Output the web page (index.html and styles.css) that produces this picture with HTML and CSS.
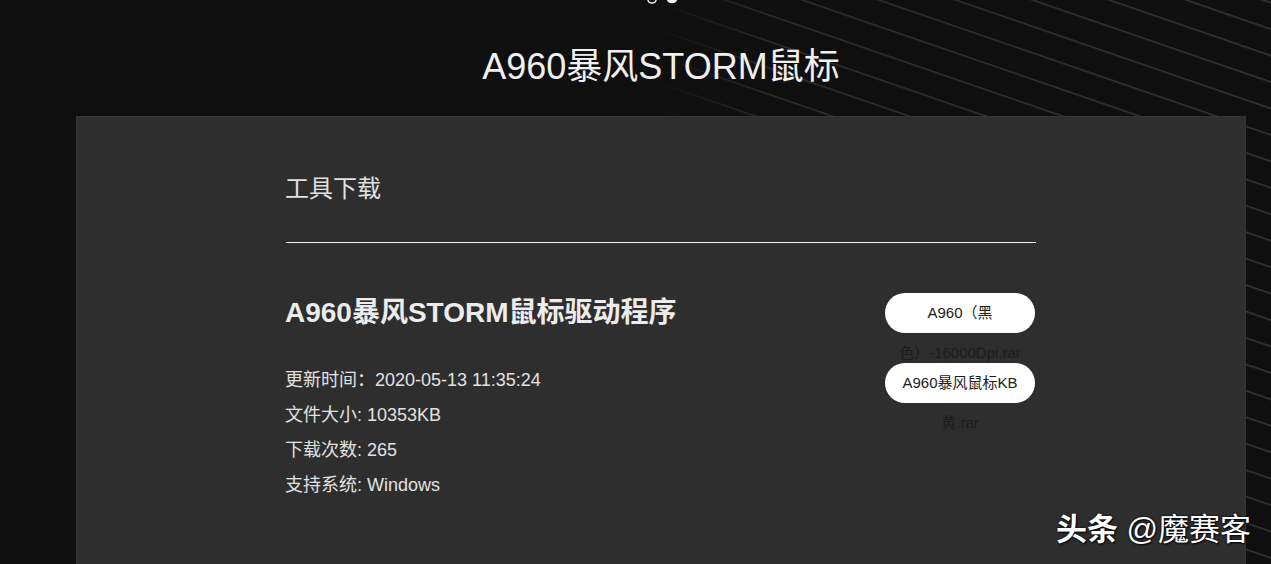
FILE: index.html
```html
<!DOCTYPE html>
<html lang="zh-CN">
<head>
  <meta charset="UTF-8">
  <meta name="viewport" content="width=device-width, initial-scale=1.0">
  <title>A960暴风STORM鼠标</title>
  <link rel="stylesheet" href="styles.css">
</head>
<body>
  <svg class="bg-lines" width="620" height="564" viewBox="0 0 620 564" aria-hidden="true">
    <defs>
      <pattern id="stripes" width="40" height="25" patternUnits="userSpaceOnUse" patternTransform="rotate(19)">
        <rect x="0" y="0" width="40" height="1.5" fill="#ffffff"></rect>
      </pattern>
      <linearGradient id="fade" x1="0" y1="0" x2="1" y2="0">
        <stop offset="0" stop-color="#fff" stop-opacity="0"></stop>
        <stop offset="0.2" stop-color="#fff" stop-opacity="0.8"></stop>
        <stop offset="1" stop-color="#fff" stop-opacity="1"></stop>
      </linearGradient>
      <mask id="fadeMask">
        <rect width="620" height="564" fill="url(#fade)"></rect>
      </mask>
    </defs>
    <rect width="620" height="564" fill="url(#stripes)" opacity="0.17" mask="url(#fadeMask)"></rect>
  </svg>

  <div class="page">
    <div class="logo">
      <svg width="34" height="4" viewBox="0 0 34 4">
        <ellipse cx="5" cy="0" rx="4" ry="3" fill="none" stroke="#eee" stroke-width="1.5"></ellipse>
        <ellipse cx="25" cy="0" rx="5" ry="3.2" fill="#f2f2f2"></ellipse>
      </svg>
    </div>
    <h1 class="page-title">A960暴风STORM鼠标</h1>

    <div class="card">
      <div class="card-inner">
        <h2 class="section-title">工具下载</h2>
        <div class="divider"></div>

        <div class="download-row">
          <div class="info">
            <h3 class="product-name">A960暴风STORM鼠标驱动程序</h3>
            <ul class="meta">
              <li>更新时间：2020-05-13 11:35:24</li>
              <li>文件大小: 10353KB</li>
              <li>下载次数: 265</li>
              <li>支持系统: Windows</li>
            </ul>
          </div>
          <div class="files">
            <a class="file-btn" href="#">A960（黑色）-16000Dpi.rar</a>
            <a class="file-btn" href="#">A960暴风鼠标KB黄.rar</a>
          </div>
        </div>
      </div>
    </div>
  </div>

  <div class="watermark"><b>头条</b> @魔赛客</div>
</body>
</html>
```

FILE: styles.css
```css
html, body {
  margin: 0;
  height: 564px;
  overflow: hidden;
}
body {
  position: relative;
  background-color: #0f0f10;
  font-family: "Liberation Sans", Arial, "Noto Sans CJK SC", sans-serif;
  color: #e6e6e6;
}
.bg-lines {
  position: absolute;
  top: 0;
  right: 0;
  z-index: 0;
}
.page {
  position: relative;
  z-index: 1;
  width: 1170px;
  margin-left: 76px;
}
.logo {
  height: 4px;
  display: flex;
  justify-content: center;
  padding-left: 6px;
}
.logo svg {
  display: block;
}
.page-title {
  margin: 42px 0 28px;
  font-size: 36px;
  line-height: 42px;
  font-weight: normal;
  text-align: center;
  color: #f0f0f0;
}
.card {
  background-color: #2e2e2e;
  border: 1px solid #353535;
  border-bottom: none;
  height: 460px;
  box-sizing: border-box;
  padding-top: 57px;
}
.card-inner {
  width: 750px;
  margin: 0 auto;
}
.section-title {
  margin: 0 0 0 -1px;
  font-size: 24px;
  line-height: 30px;
  font-weight: normal;
  color: #e2e2e2;
}
.divider {
  margin-top: 38px;
  height: 1px;
  background-color: #f2f2f2;
}
.download-row {
  display: flex;
  justify-content: space-between;
  align-items: flex-start;
  margin-top: 50px;
}
.product-name {
  margin: 0 0 0 -1px;
  font-size: 28px;
  line-height: 40px;
  font-weight: bold;
  color: #ececec;
}
.meta {
  list-style: none;
  margin: 30px 0 0 -1px;
  padding: 0;
  font-size: 18px;
  line-height: 35px;
  color: #e2e2e2;
}
.files {
  display: flex;
  flex-direction: column;
  gap: 30px;
  width: 150px;
  margin-right: 1px;
}
.file-btn {
  display: block;
  height: 40px;
  padding: 0 12px;
  border-radius: 20px;
  background-color: #ffffff;
  color: #1c1c1c;
  font-size: 15px;
  line-height: 40px;
  text-align: center;
  text-decoration: none;
}
.watermark {
  position: absolute;
  right: 20px;
  bottom: 16px;
  z-index: 2;
  font-size: 31px;
  line-height: 36px;
  color: #ffffff;
  text-shadow: 1px 1px 2px #000, 0 0 2px #000;
}
.watermark b {
  font-weight: bold;
}
```
